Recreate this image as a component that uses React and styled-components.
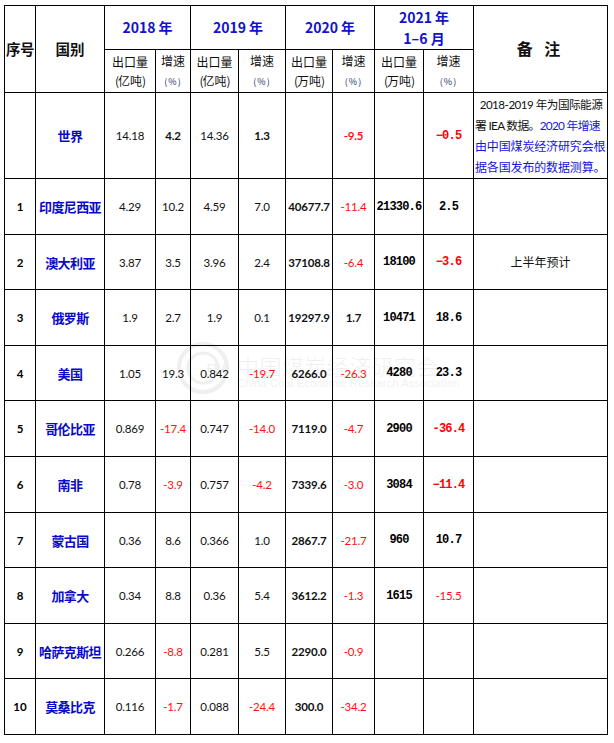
import React from "react";
import styled, { createGlobalStyle, css } from "styled-components";

const Global = createGlobalStyle`
  html, body { margin: 0; padding: 0; background: #fff; }
  body { font-family: "Noto Sans CJK SC", sans-serif; }
`;

const Page = styled.div`
  position: relative;
  padding: 5px 0 0 4px;
  width: 614px;
  height: 743px;
  box-sizing: border-box;
  overflow: hidden;
`;

const Table = styled.table`
  border-collapse: collapse;
  table-layout: fixed;
  width: 604px;
`;

const Row = styled.tr`
  height: ${(p) => p.$h}px;
`;

const Cell = styled.td`
  border: 1px solid #000;
  padding: 0;
  text-align: center;
  vertical-align: middle;
  overflow: hidden;
  white-space: nowrap;
  color: #111;
`;

const HeadCJK = styled(Cell)`
  font-family: "Noto Sans CJK SC", sans-serif;
  font-weight: 700;
  font-size: ${(p) => p.$size || 14}px;
  letter-spacing: ${(p) => p.$ls || 0}px;
  line-height: 1.1;
`;

const YearCell = styled(Cell)`
  font-family: "Noto Sans CJK SC", sans-serif;
  font-weight: 700;
  font-size: 14px;
  color: #1212cc;
  line-height: 21px;
`;

const SubHead = styled(Cell)`
  font-family: "Noto Sans CJK SC", sans-serif;
  font-size: 12px;
  line-height: 19px;
  color: #111;
`;

const Pct = styled.span`
  font-size: 9px;
  color: #28306a;
  letter-spacing: 1px;
`;

const Paren = styled.span`
  letter-spacing: -1px;
`;

const NumCell = styled(Cell)`
  font-family: Lato, "Liberation Sans", sans-serif;
  font-size: 11.5px;
  letter-spacing: -0.2px;
  color: ${(p) => (p.$red ? "#ff1010" : "#111")};
  font-weight: ${(p) => (p.$bold ? 700 : 400)};
  ${(p) =>
    p.$mono &&
    css`
      font-family: "Liberation Mono", "DejaVu Sans Mono", monospace;
      font-weight: 700;
      font-size: 12px;
      letter-spacing: -0.8px;
      color: ${p.$red ? "#ff0000" : "#000"};
    `}
`;

const SerialCell = styled(Cell)`
  font-family: Lato, "Liberation Sans", sans-serif;
  font-weight: 700;
  font-size: 11.5px;
  color: #000;
`;

const NameCell = styled(Cell)`
  font-family: "Noto Sans CJK SC", sans-serif;
  font-weight: 700;
  font-size: 13px;
  letter-spacing: -0.6px;
  color: #0a0ac8;
`;

const RemarkCell = styled(Cell)`
  font-family: Lato, "Noto Sans CJK SC", sans-serif;
  font-size: 12px;
  color: #111;
  text-align: ${(p) => (p.$left ? "left" : "center")};
  line-height: 21px;
  padding: ${(p) => (p.$left ? "0 0 0 1px" : "0")};
`;

const RemarkLine = styled.div`
  white-space: nowrap;
  text-align: ${(p) => (p.$center ? "center" : "left")};
  letter-spacing: ${(p) => p.$ls || 0}px;
  font-size: ${(p) => p.$fs || 12}px;
`;

const Blue = styled.span`
  color: #1414dc;
`;

const Watermark = styled.div`
  position: absolute;
  left: 177px;
  top: 342px;
  display: flex;
  align-items: center;
  gap: 8px;
  pointer-events: none;
  opacity: 0.06;
`;

const WmText = styled.div`
  display: flex;
  flex-direction: column;
  align-items: flex-start;
  color: #000;
  padding-top: 6px;
`;

const WmCn = styled.div`
  font-family: "Noto Sans CJK SC", serif;
  font-weight: 300;
  font-size: 22px;
  letter-spacing: 0.4px;
  line-height: 24px;
`;

const WmEn = styled.div`
  font-family: "Liberation Sans", sans-serif;
  font-size: 11px;
  line-height: 12px;
  letter-spacing: 0.2px;
`;

const Logo = () => (
  <svg width="52" height="52" viewBox="0 0 52 52">
    <circle cx="26" cy="26" r="24" fill="none" stroke="#000" strokeWidth="4" />
    <circle cx="26" cy="26" r="15" fill="none" stroke="#000" strokeWidth="3" />
    <text x="30" y="30" fontSize="10" fontFamily="Liberation Sans, sans-serif" fontWeight="700" fill="#000">
      ERA
    </text>
  </svg>
);

const n = (v, o = {}) => ({ v, ...o });

const rows = [
  {
    no: "",
    name: "世界",
    h: 86,
    vals: [n("14.18"), n("4.2", { bold: 1 }), n("14.36"), n("1.3", { bold: 1 }), n(""), n("-9.5", { red: 1, bold: 1 }), n(""), n("−0.5", { red: 1, mono: 1 })],
    remark: "world",
  },
  { no: "1", name: "印度尼西亚", h: 56, vals: [n("4.29"), n("10.2"), n("4.59"), n("7.0"), n("40677.7", { bold: 1 }), n("-11.4", { red: 1 }), n("21330.6", { mono: 1 }), n("2.5", { mono: 1 })] },
  { no: "2", name: "澳大利亚", h: 55, vals: [n("3.87"), n("3.5"), n("3.96"), n("2.4"), n("37108.8", { bold: 1 }), n("-6.4", { red: 1 }), n("18100", { mono: 1 }), n("−3.6", { mono: 1, red: 1 })], remark: "上半年预计" },
  { no: "3", name: "俄罗斯", h: 56, vals: [n("1.9"), n("2.7"), n("1.9"), n("0.1"), n("19297.9", { bold: 1 }), n("1.7", { bold: 1 }), n("10471", { mono: 1 }), n("18.6", { mono: 1 })] },
  { no: "4", name: "美国", h: 55, vals: [n("1.05"), n("19.3"), n("0.842"), n("-19.7", { red: 1 }), n("6266.0", { bold: 1 }), n("-26.3", { red: 1 }), n("4280", { mono: 1 }), n("23.3", { mono: 1 })] },
  { no: "5", name: "哥伦比亚", h: 56, vals: [n("0.869"), n("-17.4", { red: 1 }), n("0.747"), n("-14.0", { red: 1 }), n("7119.0", { bold: 1 }), n("-4.7", { red: 1 }), n("2900", { mono: 1 }), n("-36.4", { mono: 1, red: 1 })] },
  { no: "6", name: "南非", h: 56, vals: [n("0.78"), n("-3.9", { red: 1 }), n("0.757"), n("-4.2", { red: 1 }), n("7339.6", { bold: 1 }), n("-3.0", { red: 1 }), n("3084", { mono: 1 }), n("−11.4", { mono: 1, red: 1 })] },
  { no: "7", name: "蒙古国", h: 55, vals: [n("0.36"), n("8.6"), n("0.366"), n("1.0"), n("2867.7", { bold: 1 }), n("-21.7", { red: 1 }), n("960", { mono: 1 }), n("10.7", { mono: 1 })] },
  { no: "8", name: "加拿大", h: 56, vals: [n("0.34"), n("8.8"), n("0.36"), n("5.4"), n("3612.2", { bold: 1 }), n("-1.3", { red: 1 }), n("1615", { mono: 1 }), n("-15.5", { red: 1 })] },
  { no: "9", name: "哈萨克斯坦", h: 55, vals: [n("0.266"), n("-8.8", { red: 1 }), n("0.281"), n("5.5"), n("2290.0", { bold: 1 }), n("-0.9", { red: 1 }), n(""), n("")] },
  { no: "10", name: "莫桑比克", h: 56, vals: [n("0.116"), n("-1.7", { red: 1 }), n("0.088"), n("-24.4", { red: 1 }), n("300.0", { bold: 1 }), n("-34.2", { red: 1 }), n(""), n("")] },
];

const widths = [31, 69, 51, 35, 48, 47, 47, 42, 49, 50, 134];

const Unit = ({ u }) => (
  <>
    出口量
    <br />
    <Paren>(</Paren>
    {u}
    <Paren>)</Paren>
  </>
);

const Growth = () => (
  <>
    增速
    <br />
    <Pct>(%)</Pct>
  </>
);

const WorldRemark = () => (
  <RemarkCell $left>
    <RemarkLine $center $ls={-0.5} $fs={11.6}>2018-2019 年为国际能源</RemarkLine>
    <RemarkLine $ls={-0.7} $fs={11.8}>
      署 IEA 数据。<Blue>2020 年增速</Blue>
    </RemarkLine>
    <RemarkLine $ls={-0.15}>
      <Blue>由中国煤炭经济研究会根</Blue>
    </RemarkLine>
    <RemarkLine $ls={-0.15}>
      <Blue>据各国发布的数据测算。</Blue>
    </RemarkLine>
  </RemarkCell>
);

export default function App() {
  return (
    <Page>
      <Global />
      <Table>
        <colgroup>
          {widths.map((w, i) => (
            <col key={i} style={{ width: w }} />
          ))}
        </colgroup>
        <tbody>
          <Row $h={44}>
            <HeadCJK rowSpan={2} $size={14.5} $ls={-0.5}>序号</HeadCJK>
            <HeadCJK rowSpan={2} $size={14.5}>国别</HeadCJK>
            <YearCell colSpan={2}>2018 年</YearCell>
            <YearCell colSpan={2}>2019 年</YearCell>
            <YearCell colSpan={2}>2020 年</YearCell>
            <YearCell colSpan={2}>
              2021 年
              <br />
              1–6 月
            </YearCell>
            <HeadCJK rowSpan={2} $size={16} $ls={4}>备 注</HeadCJK>
          </Row>
          <Row $h={43}>
            <SubHead><Unit u="亿吨" /></SubHead>
            <SubHead><Growth /></SubHead>
            <SubHead><Unit u="亿吨" /></SubHead>
            <SubHead><Growth /></SubHead>
            <SubHead><Unit u="万吨" /></SubHead>
            <SubHead><Growth /></SubHead>
            <SubHead><Unit u="万吨" /></SubHead>
            <SubHead><Growth /></SubHead>
          </Row>
          {rows.map((r, i) => (
            <Row key={i} $h={r.h}>
              <SerialCell>{r.no}</SerialCell>
              <NameCell>{r.name}</NameCell>
              {r.vals.map((c, j) => (
                <NumCell key={j} $red={c.red} $bold={c.bold} $mono={c.mono}>
                  {c.v}
                </NumCell>
              ))}
              {r.remark === "world" ? <WorldRemark /> : <RemarkCell>{r.remark || ""}</RemarkCell>}
            </Row>
          ))}
        </tbody>
      </Table>
      <Watermark>
        <Logo />
        <WmText>
          <WmCn>中国煤炭经济研究会</WmCn>
          <WmEn>China Coal Economic Research Association</WmEn>
        </WmText>
      </Watermark>
    </Page>
  );
}
